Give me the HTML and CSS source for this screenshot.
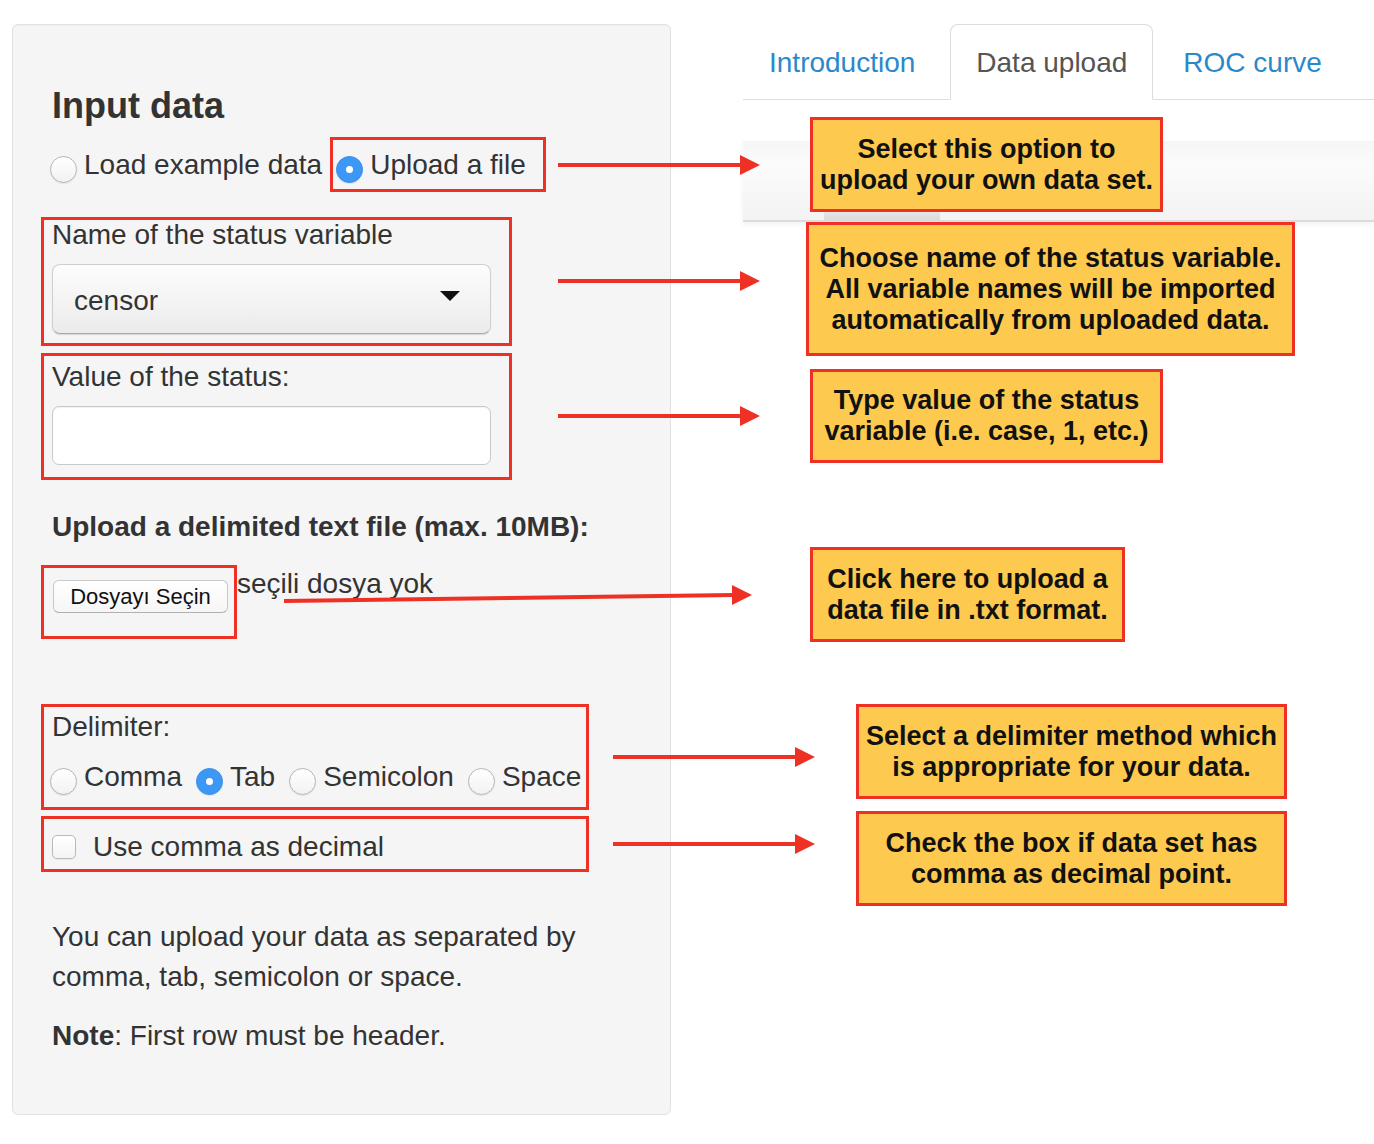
FILE: index.html
```html
<!DOCTYPE html>
<html lang="en">
<head>
<meta charset="utf-8">
<title>Data upload</title>
<link rel="stylesheet" href="styles.css">
</head>
<body>
<div class="page">
  <aside class="sidebar">
    <h3 class="title">Input data</h3>
    <div class="radio-row first">
      <label class="opt"><span class="radio"></span><span>Load example data</span></label>
      <label class="opt"><span class="radio on"></span><span>Upload a file</span></label>
    </div>
    <div class="label lbl-name">Name of the status variable</div>
    <div class="select"><span class="sel-text">censor</span><span class="caret"></span></div>
    <div class="label lbl-value">Value of the status:</div>
    <div class="input"></div>
    <div class="label bold lbl-upload">Upload a delimited text file (max. 10MB):</div>
    <div class="file-row">
      <span class="file-btn">Dosyayı Seçin</span>
      <span class="file-name">seçili dosya yok</span>
    </div>
    <div class="label lbl-delim">Delimiter:</div>
    <div class="radio-row delim">
      <label class="opt"><span class="radio"></span><span>Comma</span></label>
      <label class="opt"><span class="radio on"></span><span>Tab</span></label>
      <label class="opt"><span class="radio"></span><span>Semicolon</span></label>
      <label class="opt"><span class="radio"></span><span>Space</span></label>
    </div>
    <div class="check-row"><span class="checkbox"></span><span>Use comma as decimal</span></div>
    <p class="help">You can upload your data as separated by comma, tab, semicolon or space.</p>
    <p class="note"><b>Note</b>: First row must be header.</p>
  </aside>
  <main class="main">
    <ul class="tabs">
      <li class="tab"><a>Introduction</a></li>
      <li class="tab active"><a>Data upload</a></li>
      <li class="tab"><a>ROC curve</a></li>
    </ul>
    <div class="well-bar"><span class="slab"></span></div>
  </main>
</div>

<div class="annot">
  <div class="rbox b1"></div>
  <div class="rbox b2"></div>
  <div class="rbox b3"></div>
  <div class="rbox b4"></div>
  <div class="rbox b5"></div>
  <div class="rbox b6"></div>
  <svg class="arrows" width="1374" height="1144" viewBox="0 0 1374 1144">
    <g stroke="#ee3124" stroke-width="4" fill="none">
      <line x1="558" y1="165" x2="742" y2="165"/>
      <line x1="558" y1="281" x2="742" y2="281"/>
      <line x1="558" y1="416" x2="742" y2="416"/>
      <line x1="284" y1="601" x2="734" y2="595"/>
      <line x1="613" y1="757" x2="797" y2="757"/>
      <line x1="613" y1="844" x2="797" y2="844"/>
    </g>
    <g fill="#ee3124">
      <polygon points="740,155 760,165 740,175"/>
      <polygon points="740,271 760,281 740,291"/>
      <polygon points="740,406 760,416 740,426"/>
      <polygon points="732,585 752,595 732,605"/>
      <polygon points="795,747 815,757 795,767"/>
      <polygon points="795,834 815,844 795,854"/>
    </g>
  </svg>
  <div class="tip t1">Select this option to<br>upload your own data set.</div>
  <div class="tip t2">Choose name of the status variable.<br>All variable names will be imported<br>automatically from uploaded data.</div>
  <div class="tip t3">Type value of the status<br>variable (i.e. case, 1, etc.)</div>
  <div class="tip t4">Click here to upload a<br>data file in .txt format.</div>
  <div class="tip t5">Select a delimiter method which<br>is appropriate for your data.</div>
  <div class="tip t6">Check the box if data set has<br>comma as decimal point.</div>
</div>
</body>
</html>
```

FILE: styles.css
```css
html, body {
  margin: 0;
  padding: 0;
  background: #ffffff;
}
body {
  font-family: "Liberation Sans", Arial, Helvetica, sans-serif;
  color: #333333;
  font-size: 28px;
  line-height: 40px;
  position: relative;
  width: 1374px;
  height: 1144px;
  overflow: hidden;
}
.page {
  display: flex;
  align-items: flex-start;
  padding: 24px 0 0 12px;
}
.sidebar {
  box-sizing: border-box;
  width: 659px;
  height: 1091px;
  flex: none;
  background: #f5f5f5;
  border: 1px solid #e1e1e1;
  border-radius: 6px;
  box-shadow: inset 0 1px 1px rgba(0,0,0,0.03);
  padding: 61px 20px 0 39px;
}
.title {
  margin: 0;
  font-size: 36px;
  line-height: 40px;
  font-weight: bold;
  color: #333;
}
.radio-row {
  display: flex;
  align-items: flex-start;
  margin-left: -2px;
  gap: 14px;
}
.radio-row.first { margin-top: 19px; }
.radio-row.delim { margin-top: 10px; gap: 14px; }
.opt {
  display: flex;
  align-items: flex-start;
  white-space: nowrap;
}
.radio {
  box-sizing: border-box;
  width: 27px;
  height: 27px;
  border-radius: 50%;
  border: 1px solid #b5b5b5;
  background: linear-gradient(#ffffff, #f2f2f2);
  box-shadow: 0 1px 1px rgba(0,0,0,0.08);
  margin: 11px 7px 0 0;
  position: relative;
  flex: none;
}
.radio.on {
  border-color: #3a8ee6;
  background: #3d97f4;
}
.radio.on::after {
  content: "";
  position: absolute;
  left: 9px;
  top: 9px;
  width: 7px;
  height: 7px;
  border-radius: 50%;
  background: #ffffff;
}
.label { white-space: nowrap; }
.bold { font-weight: bold; }
.lbl-name { margin-top: 30px; }
.select {
  box-sizing: border-box;
  margin-top: 9px;
  width: 439px;
  height: 70px;
  border: 1px solid #cfcfcf;
  border-bottom-color: #a9a9a9;
  border-radius: 8px;
  background: linear-gradient(#fdfdfd, #ebebeb);
  box-shadow: 0 1px 1px rgba(0,0,0,0.12);
  display: flex;
  align-items: center;
  justify-content: space-between;
  padding: 0 30px 0 21px;
}
.sel-text {
  margin-top: 4px;
}
.caret {
  width: 0;
  height: 0;
  border-left: 10px solid transparent;
  border-right: 10px solid transparent;
  border-top: 10px solid #111;
  margin-top: -6px;
}
.lbl-value { margin-top: 23px; }
.input {
  box-sizing: border-box;
  margin-top: 9px;
  width: 439px;
  height: 59px;
  background: #ffffff;
  border: 1px solid #c9c9c9;
  border-radius: 7px;
  box-shadow: inset 0 1px 1px rgba(0,0,0,0.06);
}
.lbl-upload { margin-top: 42px; }
.file-row {
  display: flex;
  align-items: flex-start;
  margin-top: 15px;
  height: 51px;
}
.file-btn {
  box-sizing: border-box;
  margin: 18px 0 0 1px;
  height: 33px;
  width: 175px;
  border: 1px solid #c8c8c8;
  border-bottom-color: #b0b0b0;
  border-radius: 6px;
  background: linear-gradient(#ffffff, #f6f6f6);
  font-size: 22px;
  line-height: 32px;
  color: #111;
  text-align: center;
  white-space: nowrap;
}
.file-name {
  margin: 2px 0 0 9px;
  white-space: nowrap;
}
.lbl-delim { margin-top: 94px; }
.check-row {
  display: flex;
  align-items: flex-start;
  margin-top: 30px;
  white-space: nowrap;
}
.checkbox {
  box-sizing: border-box;
  width: 24px;
  height: 24px;
  margin: 8px 17px 0 0;
  border: 1px solid #b9b9b9;
  border-radius: 5px;
  background: linear-gradient(#ffffff, #f4f4f4);
  box-shadow: 0 1px 1px rgba(0,0,0,0.06);
  flex: none;
}
.help {
  margin: 50px 0 0 0;
  width: 560px;
}
.note {
  margin: 19px 0 0 0;
}
.main {
  margin-left: 72px;
  flex: 1;
}
.tabs {
  list-style: none;
  margin: 0;
  padding: 0;
  display: flex;
  border-bottom: 1px solid #dddddd;
}
.tab {
  margin-right: 4px;
  margin-bottom: -1px;
}
.tab:first-child {
  margin-right: 9px;
}
.tab a {
  display: block;
  padding: 18px 25px 16px;
  border: 1px solid transparent;
  border-radius: 8px 8px 0 0;
  color: #2a89cb;
  white-space: nowrap;
}
.tab.active a {
  color: #555555;
  background: #ffffff;
  border-color: #dddddd;
  border-bottom-color: transparent;
}
.well-bar {
  margin-top: 41px;
  height: 79px;
  background: linear-gradient(#f6f6f6, #fbfbfb 30%, #f3f3f3);
  border-bottom: 2px solid #dcdcdc;
  box-shadow: 0 3px 6px rgba(0,0,0,0.05);
  display: flex;
  align-items: flex-end;
  padding-left: 81px;
}
.slab {
  width: 116px;
  height: 8px;
  background: linear-gradient(#e6e6e6, #dadada);
}
.annot {
  position: absolute;
  left: 0;
  top: 0;
  width: 1374px;
  height: 1144px;
  pointer-events: none;
}
.arrows {
  position: absolute;
  left: 0;
  top: 0;
}
.rbox {
  position: absolute;
  box-sizing: border-box;
  border: 3px solid #ee3124;
}
.b1 { left: 330px; top: 137px; width: 216px; height: 55px; }
.b2 { left: 41px; top: 217px; width: 471px; height: 129px; }
.b3 { left: 41px; top: 353px; width: 471px; height: 127px; }
.b4 { left: 41px; top: 565px; width: 196px; height: 74px; }
.b5 { left: 41px; top: 704px; width: 548px; height: 106px; }
.b6 { left: 41px; top: 816px; width: 548px; height: 56px; }
.tip {
  position: absolute;
  box-sizing: border-box;
  border: 3px solid #ee3124;
  background: #fdc94f;
  color: #111111;
  font-weight: bold;
  font-size: 27px;
  line-height: 31px;
  text-align: center;
  white-space: nowrap;
  display: flex;
  align-items: center;
  justify-content: center;
}
.t1 { left: 810px; top: 117px; width: 353px; height: 95px; }
.t2 { left: 806px; top: 222px; width: 489px; height: 134px; }
.t3 { left: 810px; top: 369px; width: 353px; height: 94px; }
.t4 { left: 810px; top: 547px; width: 315px; height: 95px; }
.t5 { left: 856px; top: 704px; width: 431px; height: 95px; }
.t6 { left: 856px; top: 811px; width: 431px; height: 95px; }
```
